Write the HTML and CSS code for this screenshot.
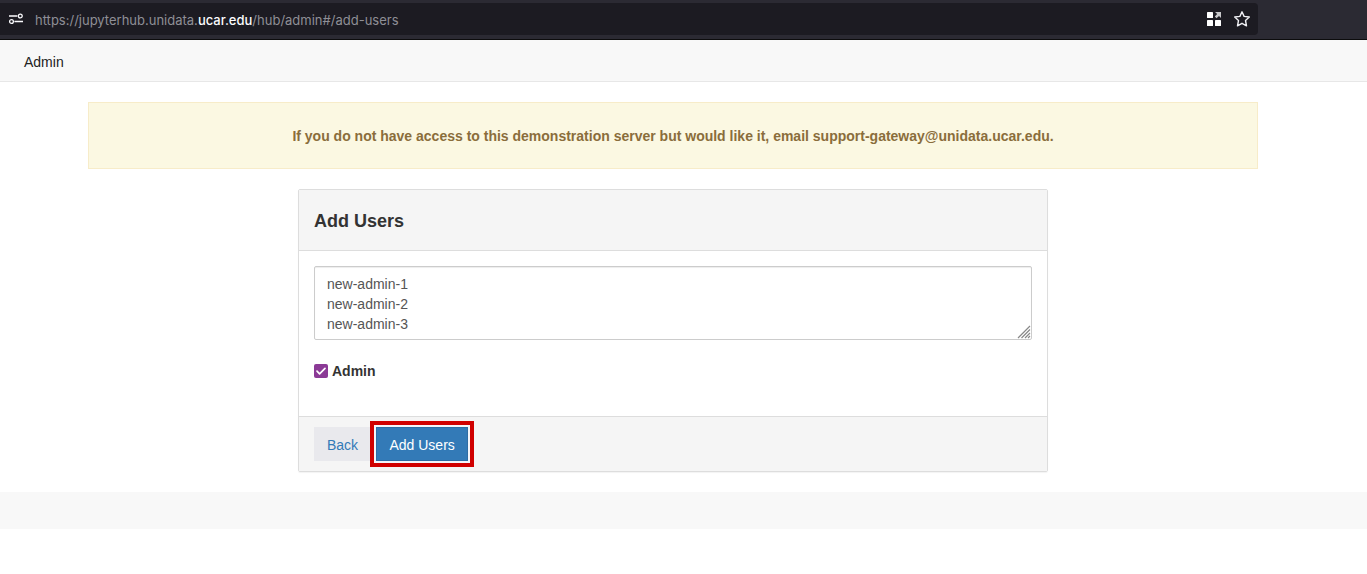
FILE: index.html
```html
<!DOCTYPE html>
<html lang="en">
<head>
<meta charset="utf-8">
<title>JupyterHub Admin</title>
<link rel="stylesheet" href="styles.css">
</head>
<body>
<div class="browser-bar">
  <div class="url-field">
    <button class="icon-button" type="button" aria-label="Site permissions">
      <svg width="16" height="16" viewBox="0 0 16 16" fill="none" stroke="#fbfbfe" stroke-width="1.3">
        <path d="M1 5h8.4M6.4 10.500H15"/><circle cx="12.3" cy="5" r="1.9"/><circle cx="3.5" cy="10.5" r="1.9"/>
      </svg>
    </button>
    <div class="url">https://jupyterhub.unidata.<span class="url-host">ucar.edu</span>/hub/admin#/add-users</div>
    <button class="icon-button" type="button" aria-label="Extensions">
      <svg width="16" height="16" viewBox="0 0 16 16" fill="#fff">
        <rect x="1" y="1" width="6" height="6" rx=".6"/><rect x="1" y="9" width="6" height="6" rx=".6"/><rect x="9" y="9" width="6" height="6" rx=".6"/>
        <path fill="#c8c8cb" d="M9 1h6v6l-2-2-2.500 2.300L8.800 5.600 11.200 3z"/>
      </svg>
    </button>
    <button class="icon-button" type="button" aria-label="Bookmark this page">
      <svg width="18" height="18" viewBox="0 0 18 18" fill="none" stroke="#f0f0f4" stroke-width="1.4" stroke-linejoin="round">
        <path d="M9 1.800l2.100 4.600 5.200.6-3.800 3.500 1 5.300L9 13.300l-4.500 2.500 1-5.300L1.700 7l5.200-.6z"/>
      </svg>
    </button>
  </div>
</div>
<nav class="navbar"><a class="nav-link" href="#/">Admin</a></nav>
<main class="container">
  <p class="alert">If you do not have access to this demonstration server but would like it, email support-gateway@unidata.ucar.edu.</p>
  <form class="panel">
    <header class="panel-heading"><h1 class="panel-title">Add Users</h1></header>
    <div class="panel-body">
      <div class="textarea-wrap">
        <textarea class="users" rows="3" aria-label="Usernames" spellcheck="false">new-admin-1
new-admin-2
new-admin-3</textarea>
        <svg class="grip" width="14" height="14" viewBox="0 0 14 14" stroke="#888" stroke-width="1.2" fill="none"><path d="M1 13L13 1M4.500 13L13 4.500M8 13l5-5M11 13l2-2"/></svg>
      </div>
      <label class="check">
        <span class="check-wrap">
          <input class="check-box" type="checkbox" checked>
          <svg class="tick" width="14" height="14" viewBox="0 0 14 14" fill="none" stroke="#fff" stroke-width="1.7" stroke-linecap="round" stroke-linejoin="round"><path d="M3 7.200l2.600 2.600L11 4.400"/></svg>
        </span>
        Admin
      </label>
    </div>
    <footer class="panel-footer">
      <button class="btn btn-back" type="button">Back</button>
      <button class="btn btn-primary" type="button">Add Users</button>
    </footer>
  </form>
</main>
<div class="bottom-bar"></div>
</body>
</html>
```
FILE: styles.css
```css
* { box-sizing: border-box; }
body {
  margin: 0;
  background: #fff;
  color: #333;
  font: 14px/20px "Liberation Sans", Arial, sans-serif;
}
.browser-bar {
  height: 40px;
  padding: 3px 109px 4px 0;
  background: #2b2a33;
  border-bottom: 1px solid #0c0c0d;
}
.url-field {
  display: flex;
  align-items: center;
  gap: 11px;
  height: 32px;
  padding: 0 7px 0 8px;
  background: #1c1b22;
  border-radius: 0 4px 4px 0;
}
.icon-button {
  display: flex;
  padding: 0;
  border: 0;
  background: none;
}
.url {
  flex: 1;
  color: #8f8f96;
  font-family: Inter, sans-serif;
  font-size: 13px;
  white-space: nowrap;
  padding-top: 2px;
}
.url-host { color: #fbfbfe; font-weight: 500; }
.navbar {
  height: 42px;
  padding: 12px 24px;
  background: #f8f8f8;
  border-bottom: 1px solid #e7e7e7;
}
.nav-link { color: #222; text-decoration: none; display: block; }
.container {
  max-width: 1191px;
  margin: 0 auto;
  padding: 20px 21px 20px 0;
}
.alert {
  margin: 0 0 20px;
  padding: 23px 15px 22px;
  border: 1px solid #f7ecc9;
  background: #fbf8e2;
  color: #8a6d3b;
  font-weight: bold;
  text-align: center;
}
.panel {
  max-width: 750px;
  margin: 0 auto;
  border: 1px solid #ddd;
  border-radius: 2px;
  box-shadow: 0 1px 1px rgba(0, 0, 0, .05);
}
.panel-heading {
  padding: 21px 15px 19px;
  background: #f5f5f5;
  border-bottom: 1px solid #ddd;
}
.panel-title { margin: 0; font-size: 18px; line-height: 20px; }
.panel-body { padding: 15px 15px 35px; }
.textarea-wrap { position: relative; }
.users {
  display: block;
  width: 100%;
  height: 74px;
  padding: 7px 12px 5px;
  border: 1px solid #ccc;
  border-radius: 2px;
  box-shadow: inset 0 1px 1px rgba(0, 0, 0, .075);
  color: #555;
  font: inherit;
  resize: none;
  overflow: hidden;
}
.grip { position: absolute; right: 1px; bottom: 1px; }
.check {
  display: flex;
  width: fit-content;
  align-items: center;
  gap: 4px;
  margin-top: 21px;
  font-weight: bold;
}
.check-wrap { position: relative; display: flex; }
.check-box {
  appearance: none;
  width: 14px;
  height: 14px;
  margin: 0;
  border-radius: 2px;
  background: #8b3a96;
}
.tick { position: absolute; inset: 0; pointer-events: none; }
.panel-footer {
  display: flex;
  gap: 5px;
  padding: 10px 15px;
  background: #f5f5f5;
  border-top: 1px solid #ddd;
}
.btn {
  height: 34px;
  padding: 1px 12px 0;
  border: 1px solid transparent;
  font: inherit;
}
.btn-back { min-width: 57px; background: #e9e9ed; color: #337ab7; }
.btn-primary {
  min-width: 92px;
  background: #337ab7;
  border-color: #2e6da4;
  color: #fff;
  outline: 4px solid #d00000;
  outline-offset: 2px;
  box-shadow: 0 0 0 2px #f3f5fa;
}
.bottom-bar { height: 37px; background: #f8f8f8; }
```
